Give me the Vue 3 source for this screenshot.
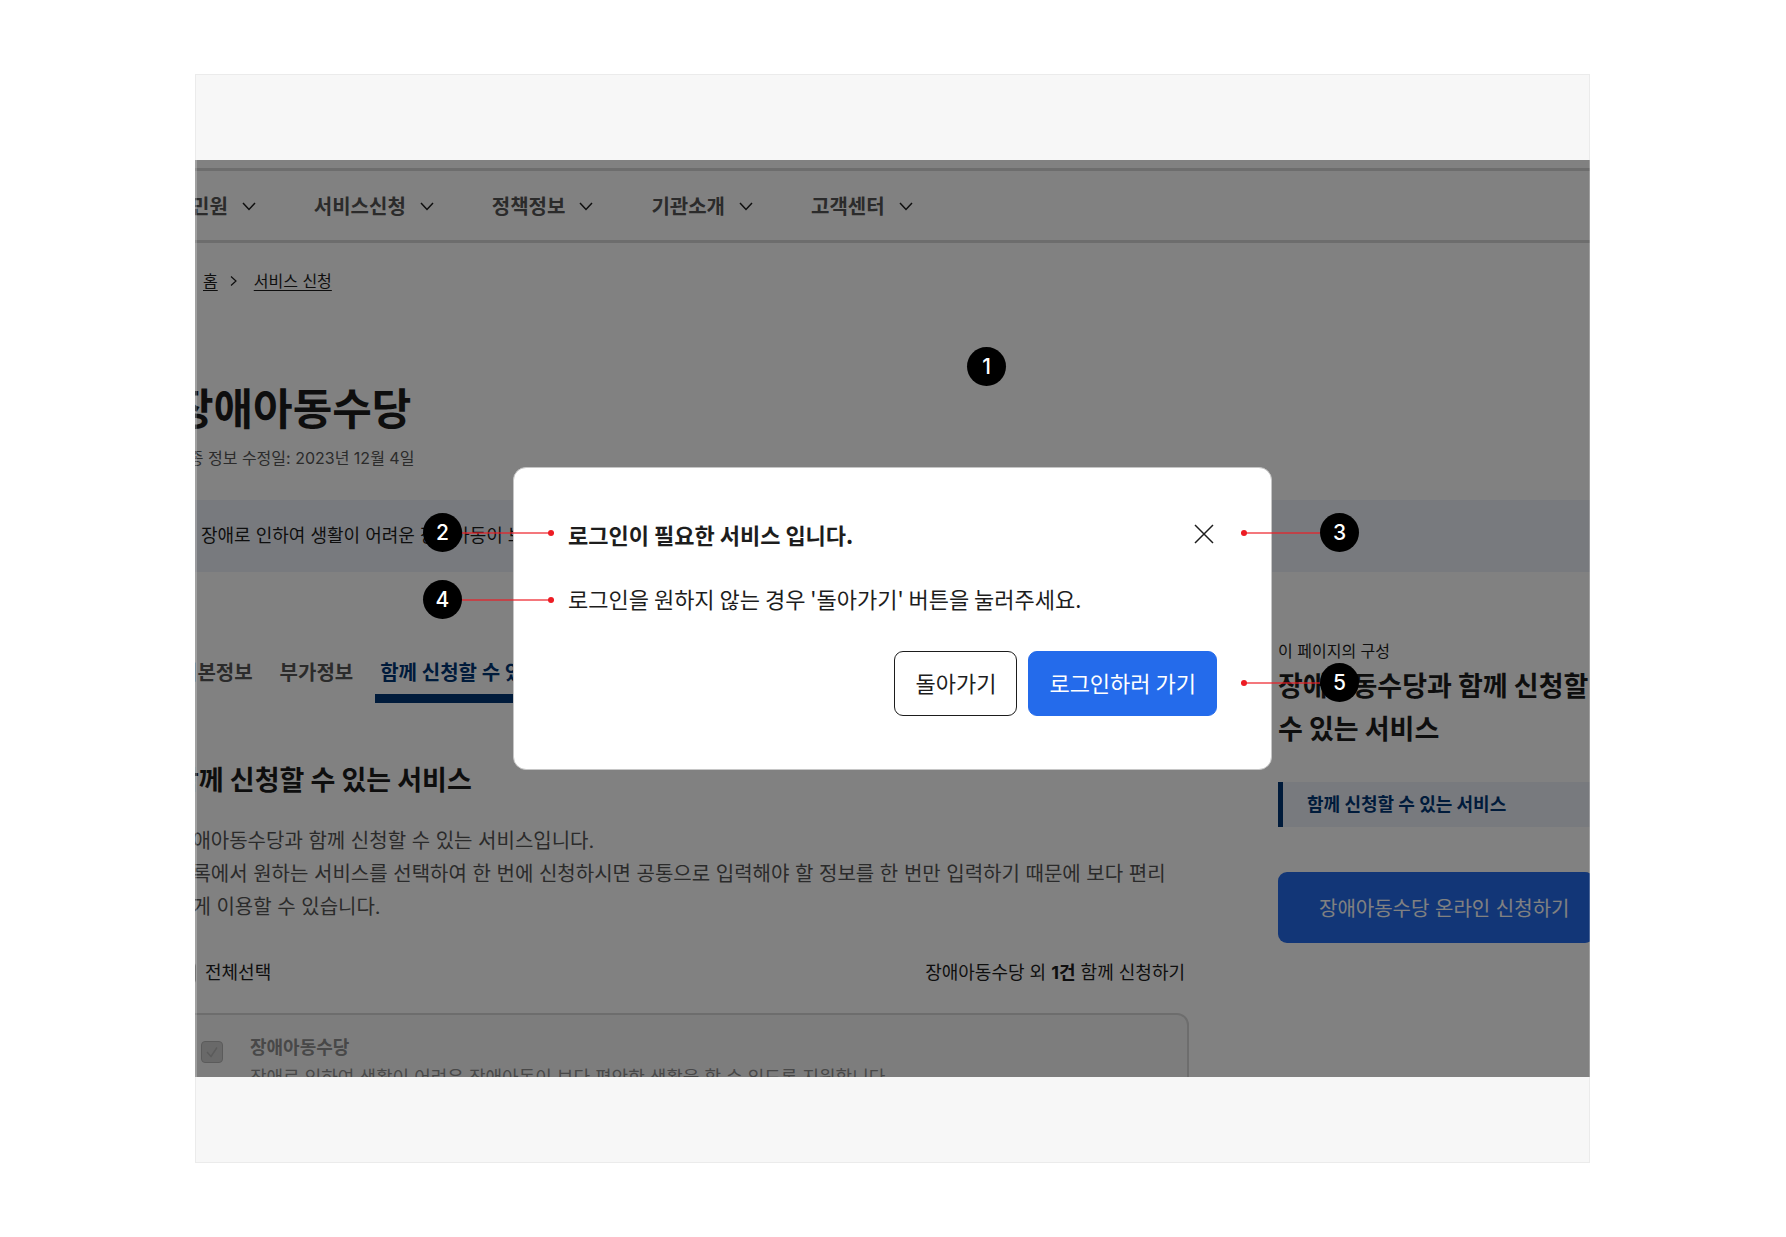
<script setup>
import { ref } from 'vue'

const navItems = ['민원', '서비스신청', '정책정보', '기관소개', '고객센터']
const tabs = ['기본정보', '부가정보', '함께 신청할 수 있는 서비스']
const activeTab = ref(2)
const allChecked = ref(false)
const notes = [
  { id: 2, side: 'left', row: 'title-row' },
  { id: 3, side: 'right', row: 'title-row' },
  { id: 4, side: 'left', row: 'text-row' },
  { id: 5, side: 'right', row: 'action-row' },
]
</script>

<template>
  <div class="page">
    <div class="frame">
      <div class="stage">
        <div class="site">
          <nav class="gnb">
            <button v-for="item in navItems" :key="item" type="button" class="gnb-item">
              <span>{{ item }}</span>
              <svg width="20" height="20" viewBox="0 0 20 20" fill="none" stroke="#1d1d1d" stroke-width="1.5">
                <path d="M4 7l6 6.500l6-6.500" />
              </svg>
            </button>
          </nav>

          <div class="crumbs">
            <a href="#">홈</a>
            <svg width="12" height="12" viewBox="0 0 12 12" fill="none" stroke="#1d1d1d" stroke-width="1.200">
              <path d="M3 1.500l5 4.500l-5 4.500" />
            </svg>
            <a href="#">서비스 신청</a>
          </div>

          <h1>장애아동수당</h1>
          <p class="updated">최종 정보 수정일: 2023년 12월 4일</p>
          <p class="band">장애로 인하여 생활이 어려운 장애아동이 보다 편안한 생활을 할 수 있도록 지원합니다.</p>

          <div class="columns">
            <main>
              <div class="tabs">
                <button
                  v-for="(tab, i) in tabs"
                  :key="tab"
                  type="button"
                  :class="['tab', { active: i === activeTab }]"
                  @click="activeTab = i"
                >{{ tab }}</button>
              </div>
              <h2>함께 신청할 수 있는 서비스</h2>
              <p class="lead">
                장애아동수당과 함께 신청할 수 있는 서비스입니다.<br />
                목록에서 원하는 서비스를 선택하여 한 번에 신청하시면 공통으로 입력해야 할 정보를 한 번만 입력하기 때문에 보다 편리<br />
                하게 이용할 수 있습니다.
              </p>
              <div class="select-row">
                <label><input v-model="allChecked" type="checkbox" class="check" />전체선택</label>
                <span>장애아동수당 외 <b>1건</b> 함께 신청하기</span>
              </div>
              <div class="card">
                <span class="check-wrap">
                  <input id="svc" type="checkbox" class="check" checked disabled />
                  <svg width="22" height="22" viewBox="0 0 22 22" fill="none" stroke="#b4b4b4" stroke-width="1.500">
                    <path d="M6 11l4 4.500l6-9" />
                  </svg>
                </span>
                <div>
                  <label for="svc">장애아동수당</label>
                  <p>장애로 인하여 생활이 어려운 장애아동이 보다 편안한 생활을 할 수 있도록 지원합니다.</p>
                </div>
              </div>
            </main>

            <aside>
              <p class="toc-label">이 페이지의 구성</p>
              <h3>장애아동수당과 함께 신청할 수 있는 서비스</h3>
              <a href="#" class="toc-link">함께 신청할 수 있는 서비스</a>
              <button type="button" class="apply">장애아동수당 온라인 신청하기</button>
            </aside>
          </div>
        </div>

        <div class="overlay">
          <div class="modal-wrap">
            <section class="modal" role="dialog" aria-labelledby="modal-title">
              <header>
                <h2 id="modal-title">로그인이 필요한 서비스 입니다.</h2>
                <button type="button" class="close" aria-label="닫기">
                  <svg width="26" height="26" viewBox="0 0 26 26" fill="none" stroke="#1d1d1d" stroke-width="1.500">
                    <path d="M4 4l18 18M22 4l-18 18" />
                  </svg>
                </button>
              </header>
              <p>로그인을 원하지 않는 경우 '돌아가기' 버튼을 눌러주세요.</p>
              <div class="actions">
                <button type="button" class="btn">돌아가기</button>
                <button type="button" class="btn primary">로그인하러 가기</button>
              </div>
            </section>
            <div v-for="n in notes" :key="n.id" :class="['note', n.side, n.row]">
              <span class="badge">{{ n.id }}</span>
              <span class="line"></span>
            </div>
            <span class="badge backdrop-note">1</span>
          </div>
        </div>
      </div>
    </div>
  </div>
</template>

<style>
body {
  margin: 0;
  background: #fff;
}
</style>

<style scoped>
.page {
  padding: 74px 196px 74px 195px;
  font-family: Inter, "Noto Sans CJK KR", sans-serif;
  color: #1d1d1d;
}
h1, h2, h3, p {
  margin: 0;
}
button {
  margin: 0;
  padding: 0;
  border: 0;
  background: none;
  font: inherit;
  color: inherit;
}
a {
  color: inherit;
}
svg {
  display: block;
}
.frame {
  padding: 85px 0;
  border: 1px solid #ebebeb;
  background: #f7f7f7;
}
.stage {
  position: relative;
  height: 917px;
  margin: 0 -1px;
  overflow: hidden;
  background: #fff;
}
.site {
  width: 1480px;
  margin-left: -21px;
  padding-top: 8px;
}
.gnb {
  display: flex;
  gap: 55px;
  padding-left: 17px;
  border-top: 3px solid #d8d8d8;
  border-bottom: 3px solid #d8d8d8;
}
.gnb-item {
  display: flex;
  align-items: center;
  gap: 11px;
  height: 69px;
  font-size: 20px;
  font-weight: 700;
  color: #555;
}
.crumbs {
  display: flex;
  align-items: center;
  gap: 10px;
  margin-top: 26px;
  padding-left: 29px;
  font-size: 16px;
  line-height: 24px;
}
.crumbs a {
  text-underline-offset: 3px;
}
.crumbs a:last-child {
  margin-left: 4px;
}
h1 {
  margin-top: 86px;
  font-size: 43px;
  font-weight: 700;
  line-height: 60px;
}
.updated {
  margin-top: 7px;
  font-size: 16px;
  line-height: 24px;
  color: #555;
}
.band {
  margin-top: 30px;
  padding: 0 27px;
  background: #eef2f9;
  font-size: 18px;
  line-height: 72px;
}
.columns {
  display: grid;
  grid-template-columns: 1015px 316px;
  column-gap: 89px;
}
.tabs {
  display: flex;
  gap: 17px;
  margin-top: 76px;
}
.tab {
  height: 55px;
  padding: 0 5px 9px;
  font-size: 20px;
  font-weight: 700;
  color: #555;
}
.tab.active {
  padding-bottom: 0;
  border-bottom: 9px solid #003675;
  color: #003675;
}
main h2,
aside h3,
.modal {
  font-family: "Noto Sans CJK KR", "Noto Sans", sans-serif;
}
main h2 {
  margin-top: 56px;
  font-size: 27px;
  font-weight: 700;
  line-height: 40px;
}
.lead {
  margin-top: 26px;
  font-size: 20px;
  line-height: 33px;
  color: #555;
  white-space: nowrap;
}
.select-row {
  display: flex;
  justify-content: space-between;
  margin-top: 35px;
  padding-right: 4px;
  font-size: 18px;
  line-height: 27px;
}
.select-row label {
  display: flex;
  align-items: center;
  gap: 9px;
}
.check {
  appearance: none;
  width: 22px;
  height: 22px;
  margin: 0;
  border: 1px solid #8e8e8e;
  border-radius: 4px;
}
.check:disabled {
  display: block;
  border-color: #b4b4b4;
  background: #d0d0d0;
}
.check-wrap {
  position: relative;
}
.check-wrap svg {
  position: absolute;
  inset: 0;
}
.card {
  display: flex;
  gap: 27px;
  margin-top: 27px;
  padding: 18px 25px;
  border: 2px solid #d8d8d8;
  border-radius: 12px;
  background: #f8f8f8;
  color: #8e8e8e;
  font-size: 18px;
  line-height: 30px;
}
.card .check-wrap {
  margin-top: 8px;
}
.card label {
  font-weight: 700;
}
.toc-label {
  margin-top: 67px;
  font-size: 16px;
  line-height: 24px;
}
aside h3 {
  font-size: 27px;
  font-weight: 700;
  line-height: 43px;
}
.toc-link {
  display: block;
  margin-top: 33px;
  padding-left: 24px;
  border-left: 5px solid #003675;
  background: #eef2f9;
  color: #003675;
  font-size: 18px;
  font-weight: 700;
  line-height: 45px;
  text-decoration: none;
}
.apply {
  width: 100%;
  height: 71px;
  margin-top: 45px;
  padding-left: 41px;
  border-radius: 9px;
  background: #246beb;
  color: #fff;
  font-size: 20px;
  text-align: left;
}
.overlay {
  position: absolute;
  inset: 0;
  display: flex;
  align-items: center;
  justify-content: center;
  box-shadow: inset 2px 0 rgba(255, 255, 255, 0.25), inset -1px 0 rgba(255, 255, 255, 0.25);
  background: rgba(0, 0, 0, 0.494);
}
.modal-wrap {
  position: relative;
  width: 759px;
}
.modal {
  padding: 52px 54px 53px;
  border: 1px solid #c6c6c6;
  border-radius: 13px;
  background: #fff;
}
.modal header {
  display: flex;
  align-items: center;
  justify-content: space-between;
}
.modal h2 {
  font-size: 22px;
  font-weight: 700;
  line-height: 28px;
}
.modal p {
  margin-top: 33px;
  font-size: 22px;
  line-height: 34px;
}
.actions {
  display: flex;
  justify-content: flex-end;
  gap: 11px;
  margin-top: 36px;
}
.btn {
  height: 65px;
  padding: 0 20px 4px;
  border: 1px solid #1d1d1d;
  border-radius: 9px;
  font-size: 22px;
}
.btn.primary {
  border-color: #246beb;
  background: #246beb;
  color: #fff;
}
.badge {
  display: flex;
  align-items: center;
  justify-content: center;
  flex: none;
  width: 39px;
  height: 39px;
  border-radius: 50%;
  background: #000;
  color: #fff;
  font: 500 21px/39px Inter, sans-serif;
}
.backdrop-note {
  position: absolute;
  top: -120px;
  left: 454px;
}
.note {
  position: absolute;
  display: flex;
  align-items: center;
}
.note.left {
  left: -90px;
  width: 131px;
}
.note.right {
  right: -87px;
  width: 118px;
  flex-direction: row-reverse;
}
.title-row {
  top: 46px;
}
.text-row {
  top: 113px;
}
.action-row {
  top: 196px;
}
.line {
  position: relative;
  flex: 1;
  height: 2px;
  background: rgba(237, 28, 36, 0.6);
}
.line::after {
  content: "";
  position: absolute;
  top: -2px;
  width: 6px;
  height: 6px;
  border-radius: 50%;
  background: #ed1c24;
}
.left .line::after {
  right: 0;
}
.right .line::after {
  left: 0;
}
</style>
